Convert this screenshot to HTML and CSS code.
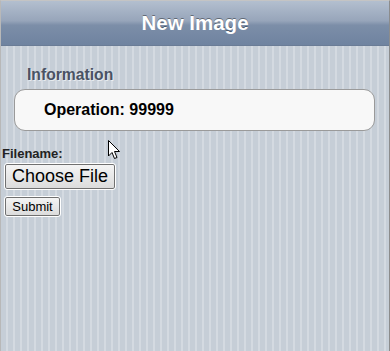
FILE: index.html
```html
<!DOCTYPE html>
<html>
<head>
<meta charset="utf-8">
<link rel="stylesheet" href="styles.css">
</head>
<body>
<div class="page">
  <div class="toolbar"><h1 class="title">New Image</h1></div>
  <div class="panel">
    <h2 class="legend">Information</h2>
    <div class="fieldset">
      <div class="row">Operation: 99999</div>
    </div>
  </div>
  <form class="upload">
    <label class="label">Filename:</label>
    <span class="btn btn-file">Choose File</span>
    <span class="btn btn-submit">Submit</span>
  </form>
  <svg class="cursor" width="13" height="20" viewBox="0 0 13 20">
    <path d="M0.5 0.5 L0.5 16 L4 12.5 L6.5 18.5 L9 17.5 L6.5 11.5 L11.5 11.5 Z" fill="#fff" stroke="#000" stroke-width="1" stroke-linejoin="miter"/>
  </svg>
</div>
</body>
</html>
```
FILE: styles.css
```css
html, body {
  margin: 0;
  padding: 0;
}
body {
  width: 390px;
  height: 351px;
  overflow: hidden;
  font-family: "Liberation Sans", Arial, sans-serif;
}
.page {
  position: relative;
  box-sizing: border-box;
  width: 390px;
  height: 351px;
  border-top: 1px solid #c4c4c4;
  border-left: 1px solid #b8b8b8;
  border-right: 1px solid #8c8c8c;
  background: repeating-linear-gradient(90deg, #c6ced7 0 5px, #d4dae1 5px 7px);
}
.toolbar {
  height: 44px;
  background: linear-gradient(#b3bfcf 0%, #97a5ba 45%, #7c8ea8 55%, #6f83a0 100%);
  border-bottom: 1px solid #6a7c96;
  display: flex;
  align-items: center;
  justify-content: center;
}
.title {
  margin: 0;
  color: #fff;
  font-size: 20.5px;
  font-weight: bold;
  text-shadow: rgba(0,0,0,0.4) 0 -1px 0;
}
.panel {
  padding: 20px 14px 0 13px;
}
.legend {
  margin: 0 0 6px 13px;
  font-size: 15.7px;
  font-weight: bold;
  color: #4a5264;
  text-shadow: rgba(255,255,255,0.6) 1px 1px 0;
  line-height: 17px;
}
.fieldset {
  background: #f8f8f8;
  border: 1px solid #9a9a9a;
  border-radius: 11px;
  height: 40px;
  display: flex;
  align-items: center;
  padding-left: 29px;
}
.row {
  font-size: 16px;
  font-weight: bold;
  color: #000;
  position: relative;
  top: 0;
}
.upload {
  display: flex;
  flex-direction: column;
  align-items: flex-start;
  padding: 15px 0 0 1px;
}
.label {
  font-size: 13px;
  font-weight: bold;
  color: #222;
  line-height: 15px;
}
.btn {
  box-sizing: border-box;
  display: flex;
  align-items: center;
  justify-content: center;
  color: #000;
  background: linear-gradient(#f4f4f4, #dcdcdc);
  border: 1px solid #707070;
  outline: 1px solid #fff;
  margin-left: 3px;
}
.btn-file {
  margin-top: 3px;
  width: 110px;
  height: 25px;
  font-size: 18px;
  border-radius: 2px;
}
.btn-submit {
  margin-top: 8px;
  width: 55px;
  height: 19px;
  font-size: 13px;
  border-radius: 2px;
}
.cursor {
  position: absolute;
  left: 107px;
  top: 139px;
}
```
